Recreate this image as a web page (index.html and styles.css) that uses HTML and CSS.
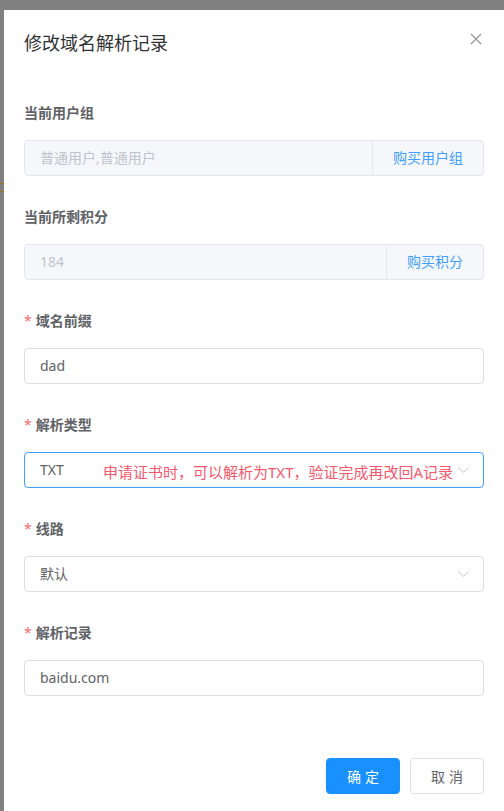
FILE: index.html
```html
<!DOCTYPE html>
<html lang="zh-CN">
<head>
    <meta charset="UTF-8">
    <meta name="viewport" content="width=device-width, initial-scale=1.0">
    <title>修改域名解析记录</title>
    <link rel="stylesheet" href="styles.css">
</head>
<body>
    <div class="overlay">
        <div class="dialog">
            <div class="dialog-header">
                <span class="dialog-title">修改域名解析记录</span>
                <button class="dialog-close" aria-label="关闭">
                    <svg width="12" height="12" viewBox="0 0 12 12">
                        <path d="M1 1 L11 11 M11 1 L1 11" stroke="#909399" stroke-width="1.2" fill="none"/>
                    </svg>
                </button>
            </div>

            <div class="dialog-body">
                <div class="form-item">
                    <label class="form-label">当前用户组</label>
                    <div class="input-group">
                        <div class="input disabled">普通用户,普通用户</div>
                        <div class="input-append">购买用户组</div>
                    </div>
                </div>

                <div class="form-item">
                    <label class="form-label">当前所剩积分</label>
                    <div class="input-group">
                        <div class="input disabled">184</div>
                        <div class="input-append">购买积分</div>
                    </div>
                </div>

                <div class="form-item">
                    <label class="form-label"><span class="required">*</span>域名前缀</label>
                    <div class="input">dad</div>
                </div>

                <div class="form-item">
                    <label class="form-label"><span class="required">*</span>解析类型</label>
                    <div class="input select focused">
                        <span class="select-value">TXT</span>
                        <span class="select-hint">申请证书时，可以解析为TXT，验证完成再改回A记录</span>
                        <svg class="chevron" width="11" height="6" viewBox="0 0 11 6">
                            <path d="M0.5 0.5 L5.5 5.3 L10.5 0.5" stroke="#c0c4cc" stroke-width="1" fill="none"/>
                        </svg>
                    </div>
                </div>

                <div class="form-item">
                    <label class="form-label"><span class="required">*</span>线路</label>
                    <div class="input select">
                        <span class="select-value">默认</span>
                        <svg class="chevron" width="11" height="6" viewBox="0 0 11 6">
                            <path d="M0.5 0.5 L5.5 5.3 L10.5 0.5" stroke="#c0c4cc" stroke-width="1" fill="none"/>
                        </svg>
                    </div>
                </div>

                <div class="form-item">
                    <label class="form-label"><span class="required">*</span>解析记录</label>
                    <div class="input">baidu.com</div>
                </div>
            </div>

            <div class="dialog-footer">
                <button class="btn btn-primary">确定</button>
                <button class="btn">取消</button>
            </div>
        </div>
    </div>
</body>
</html>
```

FILE: styles.css
```css
body {
    margin: 0;
    font-family: "Noto Sans", "Noto Sans CJK SC", sans-serif;
    background: #808080;
    overflow: hidden;
}
.overlay {
    height: 811px;
    padding: 10px 0 0 4px;
    box-sizing: border-box;
    background:
        linear-gradient(#a0731e, #a0731e) 0 183px / 4px 1px no-repeat,
        linear-gradient(#a0731e, #a0731e) 0 191px / 4px 1px no-repeat,
        #808080;
}
.dialog {
    background: #fff;
    height: 100%;
}
.dialog-header {
    display: flex;
    justify-content: space-between;
    align-items: flex-start;
    padding: 20px 20px 10px;
}
.dialog-title {
    font-size: 18px;
    line-height: 26px;
    color: #303133;
}
.dialog-close {
    border: none;
    background: none;
    padding: 0;
    margin: 3px 2px 0 0;
    width: 12px;
    height: 12px;
    display: flex;
    cursor: pointer;
}
.dialog-body {
    padding: 37px 20px 0;
}
.form-item {
    margin-bottom: 31px;
}
.form-label {
    display: block;
    font-size: 14px;
    font-weight: bold;
    line-height: 20px;
    color: #606266;
    margin-bottom: 17px;
}
.required {
    color: #f56c6c;
    font-weight: normal;
    margin-right: 4px;
}
.input {
    height: 36px;
    box-sizing: border-box;
    border: 1px solid #dcdfe6;
    border-radius: 4px;
    padding: 0 15px;
    font-size: 14px;
    line-height: 34px;
    color: #606266;
    display: flex;
    align-items: center;
}
.input.disabled {
    background: #f5f7fa;
    border-color: #e4e7ed;
    color: #c0c4cc;
}
.input-group {
    display: flex;
}
.input-group .input {
    flex: 1;
    border-radius: 4px 0 0 4px;
}
.input-append {
    height: 36px;
    box-sizing: border-box;
    border: 1px solid #e4e7ed;
    border-left: 0;
    border-radius: 0 4px 4px 0;
    background: #f5f7fa;
    padding: 0 20px;
    font-size: 14px;
    line-height: 34px;
    color: #409eff;
}
.select.focused {
    border-color: #409eff;
}
.select-value {
    width: 63px;
    flex-shrink: 0;
}
.select-hint {
    color: #f5576c;
    font-size: 15px;
    white-space: nowrap;
    margin-top: 4px;
}
.chevron {
    margin-left: auto;
    margin-right: -1px;
    flex-shrink: 0;
}
.dialog-footer {
    display: flex;
    justify-content: flex-end;
    gap: 10px;
    padding: 31px 20px 20px;
}
.btn {
    width: 74px;
    height: 36px;
    box-sizing: border-box;
    border: 1px solid #dcdfe6;
    border-radius: 4px;
    background: #fff;
    color: #606266;
    font-family: inherit;
    font-size: 14px;
    letter-spacing: 4px;
    padding: 0 0 0 4px;
    cursor: pointer;
}
.btn-primary {
    background: #1890ff;
    border-color: #1890ff;
    color: #fff;
}
```
